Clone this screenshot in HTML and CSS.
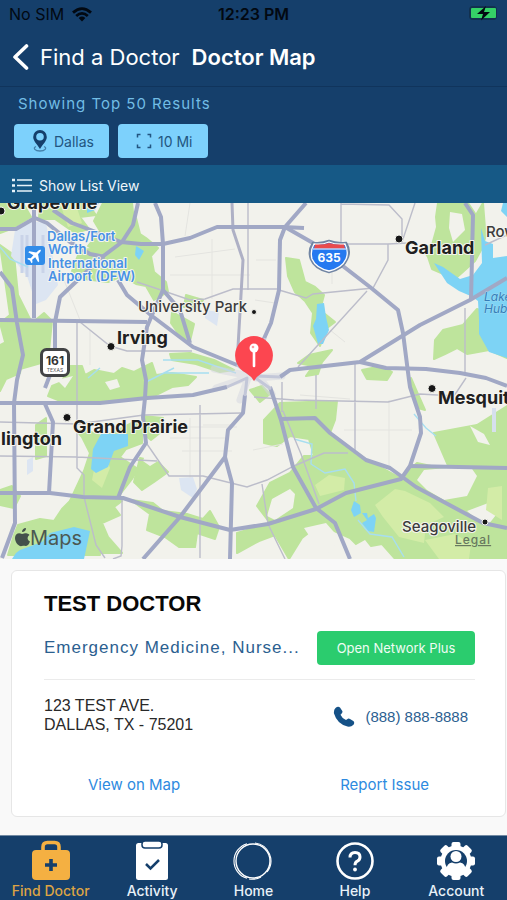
FILE: index.html
```html
<!DOCTYPE html>
<html lang="en">
<head>
<meta charset="utf-8">
<meta name="viewport" content="width=device-width, initial-scale=1">
<title>Doctor Map</title>
<link rel="stylesheet" href="styles.css">
</head>
<body>
<header class="top">
  <div class="status">
    <span class="carrier">No SIM
      <svg width="20" height="15" viewBox="0 0 20 15" aria-hidden="true"><g fill="none" stroke="#020912" stroke-width="2.8"><path d="M1 5.6Q10-2.4 19 5.6"/><path d="M4.2 9Q10 3.8 15.800 9"/></g><path d="M6.700 10.900Q10 8.200 13.300 10.900L10 14.500Z" fill="#020912"/></svg>
    </span>
    <span class="clock">12:23 PM</span>
    <svg class="battery" width="30" height="16" viewBox="0 0 30 16" aria-hidden="true"><rect x="1" y="0" width="28" height="14" rx="4" fill="#12304f"/><rect x="3" y="2" width="25" height="10" rx="1" fill="#35d167"/><path d="M18 0 9 8h6l-2 6.500L22 6h-6Z" fill="#020912"/></svg>
  </div>
  <nav class="crumbs">
    <a class="back" href="#find">
      <svg width="17" height="28" viewBox="0 0 17 28" aria-hidden="true"><path d="M14.500 3 3 14 14.500 25" fill="none" stroke="#fff" stroke-width="3.600" stroke-linecap="round" stroke-linejoin="round"/></svg>
      Find a Doctor</a>
    <h1>Doctor Map</h1>
  </nav>
  <section class="filters">
    <p>Showing Top 50 Results</p>
    <div class="chips">
      <button class="chip" type="button">
        <svg width="16" height="24" viewBox="0 0 16 24" aria-hidden="true"><path d="M4 17.500C.5 19 3 22 8 22s7.500-3 4-4.500" fill="none" stroke="#4481ab" stroke-width="1.300"/><path fill-rule="evenodd" d="M8 1a6.800 6.800 0 0 0-6.800 7C1.200 12 5 15 8 20c3-5 6.800-8 6.800-12A6.800 6.800 0 0 0 8 1Zm0 3a3.800 3.800 0 1 1 0 7.600A3.800 3.800 0 0 1 8 4Z" fill="#153f6b"/></svg>
        Dallas</button>
      <button class="chip" type="button">
        <svg width="16" height="16" viewBox="0 0 16 16" aria-hidden="true"><path d="M1.500 4.500v-3h3M11.500 1.500h3v3M14.500 11.500v3h-3M4.500 14.500h-3v-3" fill="none" stroke="#225580" stroke-width="1.500"/></svg>
        10 Mi</button>
    </div>
  </section>
  <button class="list-toggle" type="button">
    <svg width="20" height="15" viewBox="0 0 20 15" aria-hidden="true"><path d="M5 2h15M5 7.500h15M5 13h15" stroke="#e8f3fa" stroke-width="1.700"/><path d="M0 2h3M0 7.500h3M0 13h3" stroke="#e8f3fa" stroke-width="2.600"/></svg>
    Show List View</button>
</header>

<main>
  <div class="map">
  <svg viewBox="0 203 507 356" role="img" aria-label="Map of Dallas">
    <rect y="203" width="507" height="357" fill="#f2f2ec"/>
    <g class="green">
      <path d="M5 203h18l8 14-20 12-11 4v-30Z"/>
      <path d="M40 203h47l9 12-16 2 9 12-14 4-20-14-16 0Z"/>
      <path d="M103 203h29l2 18-10 20-24 12-12-7 12-15-6-10Z"/>
      <path d="M0 245 14 255l4 40 14 28 12-10 8 8-4 40-28 8-12-16-8-30 10-8Z"/>
      <path d="M0 345l12-6 12 6-4 28-14 6-6 12Z"/>
      <path d="M80 250l22-2 20-8 14-22 4 16 6 4 12 10-7 8 3 16 12 10 2 10-14 8-8-14-10-2-14-8-14 6-24-3-12-8Z"/>
      <path d="M172 312l22 12-4 17-10-5-9-13Z"/>
      <path d="M68 366h14l3 9 9-5 20 4 8-6 12 4 18-9 4 12 16-2 24 4-8 8-16 2-16 8-26 4-44 3-28-2-10-4 4-10 10-4Z"/>
      <path d="M170 354l20-1 24 7 20 10-14 2-24-8-24-4ZM143 416l20 2-2 14-10 8-10-8Z"/>
      <path d="M76 430l12 1 16 6 28-14 10-2v22l-16 6-6 8 18 12-6 10-14 18 4 4-8 6 6 8-18 8 6 14 14 16h-30l-16-20-4-24-2-8 14-30 6-18-8-16Z"/>
      <path d="M36 425l10-7v38l-10 3Z"/>
      <path d="M0 490l12-4 8 10-6 12-14-3ZM18 525l22-6 14 2 8-12 10-10 14-2 14 58H8l6-20Z"/>
      <path d="M140 458l18 4 10 10-14 10-12 8-8-8ZM131 500l22 3 10 8 24 3 16 5 7-8 9 16-4 12-18-6-2 14-16 0-14-10-18-7 3-16Z"/>
      <path d="M264 420l16-17 57-2-2 19-5 13 37 27 33 18 17-15 33 7-16-37 43-8 32-20v156H397l-15-17-22 4-10-10-18-8-12-6-18 14-13 21-14-24-16 6-22 12v-20l33-10-13-17 13-23 20-10 14-17 10 0-5-17-19-3-13 10-13-3Z"/>
      <path d="M286 258l13 2 6 22 10 5 9 8-4 15 15 12-8 6-7 18-9-13 2-20-8-12-10-9-7-16Z"/>
      <path d="M309 355l23-5-10 12-4 12-12 2 7-10-15-3Z"/>
      <path d="M438 203h30l8 12 7-12 3 38-11 20-20 18-23-10-4-12-5-8 9-4 5-18-1-10Z"/>
      <path d="M435 340l8-10 20-5 14-16 14 5 6 18 10 10v16l-18-8-22 4-10-6-12 6-11 5Z"/>
      <path d="M362 370l20-4 10 6-5 8-20-1ZM411 378l6 14 8 18-7-2-6-14Z"/>
      <path d="M186 295l17 5-5 8-14-1ZM250 390l12-4 8 8-10 8Z"/>
    </g>
    <g fill="#f2f2ec">
      <path d="M57 380l16-4-8 12ZM105 382l12-3 3 8-10 3Z"/>
      <path d="M145 455l9-4 4 10-8 5-7-5ZM272 499l18-10 5 5-2 14-18 12-8-4ZM304 528l22-5 14 16-12 14-18-16ZM470 426l14 8 6 11-12-3Z"/>
      <path d="M417 480l7-10 46-4 7 10-10 20-23 4-17-10ZM467 511l24-9 5 13-8 10-14-8ZM365 540l8 10-10 8-16-8Z"/>
      <path d="M450 212l12 2 3 16-12 12-4-14ZM487 234l8 3-5 12-6-3Z"/>
    </g>
    <g fill="#d3eca7">
      <path d="M315 485l14-10 16 3-1 12-24 6ZM375 505l20-16 10 2 25 12 14 14-18 8-2 18-25-6-16-20ZM425 540l30-6 16 10-2 15h-30ZM488 488l14-2v34l-16-10ZM488 318l19 20v18l-22-12 4-14ZM60 203l16 2 6 18-14 4ZM100 440l-8 40 10 8 8-20Z"/>
    </g>
    <g fill="#dce5f2">
      <path d="M15 230l15-9 16 2 4 20 8 42-12 15-10 4-9-28-16-20Z"/>
      <path d="M179 478l14-1 4 12-4 9-12-8ZM205 310l14 2-2 14-12-8ZM27 460l6-3v14l-6 4Z"/>
    </g>
    <g stroke="#c9d3e8" stroke-width="3"><path d="M22 235v38M27 235v42M43 235v38"/></g>
    <g fill="#7dd3f5">
      <path d="M101 434l27 0v12l-14 5-6 16-12 6-5-4 2-20Z"/>
      <path d="M20 550l22-8 8-9 24-6 16 4-6 28H12l4-6Z"/>
      <path d="M317 304l7-1 2 14 3 13-6 14-5 0-5-18 3-7Z"/>
      <path d="M354 501l6 4 1 8-7 4-3-7ZM362 513l5 0 1 5 6-4 2 4-2 14-6-1-6-8 5-3Z"/>
      <path d="M434 263l9 4 17 12 13-4v22l-14-6-12-8Z"/>
      <path d="M481 228l4 13 8 3v14l14-2v102l-18-6-10-18 0-15-1-18-8-6 3-20 9-12Z"/>
      <path d="M136 246l8 5-5 9-4-5ZM87 203h12l-4 7-8 3ZM503 203h4v14l-6-6Z"/>
    </g>
    <path d="M0 247l10 12 18 8M163 360h35l38 13M164 373h45M294 439l18 5-1 20 14 9 20-4 9 14 2 18M358 520l12 14 22 3 12 20M414 414l12 14 10 8M88 378l12-10M146 382l28-14" fill="none" stroke="#a7def0" stroke-width="1.400"/>
    <path d="M494 408v24" fill="none" stroke="#d6e0ed" stroke-width="4"/>
    <g fill="none" stroke="#e4e4e0" stroke-width="1"><path d="M170 275h80M175 257l60-8M190 203l-5 33M212 239v60M255 300l20 3M256 260h20M332 244v40M389 400v70M344 430h68M203 425h30M182 427h55M182 451h50M190 418v60M170 438h57M60 270l20 50M90 330v35M300 395l50 4M253 450l30-6M330 330l15 12"/></g>
    <g fill="none" stroke="#bcbdca" stroke-width="1.400">
      <path d="M248 203v87M137 282l18 6 35 12 15-1 28-10h46M77 320v148l7 7v22l12 48 9 13M80 322l30 24 17 5h65M0 422l77 2 67-9 98-2M0 456l77 1 80 4M147 444l22 32h34l44 11 20-7 27-14 30-13h24M341 203v41h47l20-1M341 204l48 1 13 14v23l13-39M388 244v16l-15 28-60 6-7 4-27-8M367 291l-69 76M355 364v90M465 308v68M485 245l22-10M316 375v34M282 382v30M254 397l40 3 94 2 32-8 34 2 12-18M200 405v153M122 500v46l-1 10-8 3M262 484l6 40 17 35M283 411l18 43 18 50"/>
    </g>
    <g class="haze" fill="none" stroke="#d3d5df"><path d="M214 369l42 8M216 388l36-12M248 378l-8 22M258 376l14 18M256 378l26-2" stroke-width="7"/></g>
    <path d="M232 203l1 27 10 30-5 87v20" fill="none" stroke="#aeb0c5" stroke-width="3"/>
    <g class="roads">
      <path d="M34 203v115M0 229h16l19-11 12 5 23 19 20 12 15 3"/>
      <path d="M53 210l19 13 24 9 25 10 20 2h22l27-6 27-11h66l21 1"/>
      <path d="M138 203l-5 22-11 17-20 15-42 40-5 25v40l-10 26"/>
      <path d="M155 203l6 14 2 27v46l-11 25-5 12-5 33 4 20-1 18-2 19 3 26-16 24-12 31"/>
      <path d="M163 290l17 20 10 33M0 320l147 2M118 280l9 15 25 21 41 31 44 18"/>
      <path d="M0 272l12 16 5 35 6 32-6 25-3 23 1 120-13 35"/>
      <path d="M0 403l100 0 47-5 46-3 34-8M45 404l8 18-4 71"/>
      <path d="M0 493h50l33 4 40 1 57 19 50 13 38-6 48-15 30-16 55-14 9-13 11-33-1-16-10-30-1-7-6-47-5-23-28-23-57-44-28-16-5 13-1 50-8 33-9 20"/>
      <path d="M245 395l-2 18-15 17-3 27 7 26-2 76M225 457l-45 60-37 42"/>
      <path d="M270 387l11 33 12 47 23 41 19 15 15 36"/>
      <path d="M281 419l34-1 15 15 36 27 24 8 26 19 67 36 24 5M410 466l97 2"/>
      <path d="M306 203l-21 24M280 377l10-7 70-8 60-37 50-25 37-22"/>
      <path d="M360 362l26 6 40 1 34 4 26 5 21 8M465 203l8 12-2 85"/>
    </g>
    <g class="roads faint"><path d="M237 365l20 14 14 10M227 387l20-9-2 18M265 338l-8 36M256 376l24 1"/></g>

    <g>
      <rect x="25" y="246" width="20" height="19" rx="3" fill="#318ce9"/>
      <path transform="translate(35 255.500) rotate(45)" d="M0-8C1-8 1.300-6 1.300-3L7 1v1.500L1.300 1 1 5l2 1.500V8L0 7l-3 1V6.500L-1 5l-.3-4L-7 2.500V1l5.700-4C-1.300-6-1-8 0-8Z" fill="#fff"/>
      <rect x="41.500" y="349.500" width="27" height="26" rx="5" fill="#fff" stroke="#424345" stroke-width="3"/>
      <text x="55" y="365" class="num" text-anchor="middle">161</text>
      <text x="55" y="372" class="tiny" text-anchor="middle">TEXAS</text>
      <path d="M313 243q9 1 16-2 7 3 17 2 5 8 1 16-4 10-18 13-14-3-18-13-3-8 2-16Z" fill="#2579f0" stroke="#7185a3" stroke-width="2.500"/>
      <path d="M314 244q8 1 15-2 7 3 16 2 4 8 1 15-4 9-17 12-13-3-17-12-2-8 2-15Z" fill="#2579f0" stroke="#fff" stroke-width="1.300"/>
      <path d="M315 244.500q8 .5 14-1.500 7 2 15 1.500l1 4h-31Z" fill="#e94b4d"/><path d="M313 249h33" stroke="#fff"/>
      <text x="329" y="262" class="shield" text-anchor="middle">635</text>
    </g>
    <g fill="#161616" stroke="#f5f5ef"><circle cx="1" cy="211" r="4"/><circle cx="111" cy="346.500" r="4"/><circle cx="399" cy="239" r="4"/><circle cx="67" cy="417.500" r="4"/><circle cx="432" cy="388.500" r="4"/><circle cx="485" cy="522" r="3"/><circle cx="254" cy="312" r="2.500"/></g>
    <g class="city">
      <text x="7" y="209">Grapevine</text>
      <text x="117" y="344">Irving</text>
      <text x="405" y="254">Garland</text>
      <text x="73" y="433">Grand Prairie</text>
      <text x="1" y="445">lington</text>
      <text x="438" y="404">Mesquite</text>
    </g>
    <g class="town"><text x="138" y="312">University Park</text><text x="402" y="532">Seagoville</text><text x="486" y="237">Rowlett</text></g>
    <g class="airport"><text x="47" y="241">Dallas/Fort</text><text x="48" y="254">Worth</text><text x="48" y="268">International</text><text x="48" y="281">Airport (DFW)</text></g>
    <g class="lake"><text x="484" y="301">Lake Ray</text><text x="484" y="313">Hubbard</text></g>
    <g fill="#43514b"><path d="M22 534c2 0 3-1 5-.5 1.200.2 2 .8 2.500 1.600-3 2-2 5.500.5 6.500-1 2.700-2.500 4.600-4.200 4.400-1.500-.5-2.400-.5-3.800 0C18.500 547 15 542 15 538c0-4 3.500-6 7-4Z"/><path d="M22 532c0-2 1.500-4 4-4 0 2.500-1.500 4-4 4Z"/></g>
    <text x="30" y="545" class="brand">Maps</text>
    <a href="#legal"><text x="455" y="544" class="legal">Legal</text></a>
    <g><path d="M254 336a19.500 19.500 0 0 0-8 37q5 3 8 8 3-5 8-8a19.500 19.500 0 0 0-8-37Z" fill="#fc4650"/><circle cx="254" cy="348" r="4.500" fill="#fff"/><path d="M254 350v16" stroke="#fff" stroke-width="2.600" stroke-linecap="round"/><circle cx="253" cy="347" r="1.300" fill="#fc9ba0"/></g>
  </svg>
  </div>

  <article class="card">
    <h2>TEST DOCTOR</h2>
    <div class="row specialty">
      <p>Emergency Medicine, Nurse...</p>
      <button class="plan" type="button">Open Network Plus</button>
    </div>
    <div class="row contact">
      <address>123 TEST AVE.<br>DALLAS, TX - 75201</address>
      <a class="phone" href="tel:8888888888">
        <svg width="22" height="22" viewBox="0 0 22 22" aria-hidden="true"><path d="M2.500 2Q5-.2 7 1.500L9.300 5Q10 6.500 8.300 7.900L7.500 8.700Q9 12.300 13 14l1.200-.8Q15.500 12 17 13l3.300 2Q22 16.500 20.500 18.700 18 21.300 14.500 20.600 4 17.800 1 7.500.5 4 2.500 2Z" fill="#155187"/></svg>
        (888) 888-8888</a>
    </div>
    <div class="actions"><a href="#map">View on Map</a><a href="#report">Report Issue</a></div>
  </article>
</main>

<nav class="tabs">
  <a class="active" href="#find"><svg width="40" height="40" viewBox="0 0 40 40" aria-hidden="true"><path d="M12 11V7q0-4.500 4.500-4.500h7Q28 2.500 28 7v4" fill="none" stroke="#f4b042" stroke-width="3.600"/><rect x="1" y="10" width="38" height="30" rx="4" fill="#f4b042"/><path d="M20 19v12M14 25h12" stroke="#153f6b" stroke-width="3.600"/></svg>Find Doctor</a>
  <a href="#activity"><svg width="40" height="40" viewBox="0 0 40 40" aria-hidden="true"><rect x="4" y="3" width="32" height="37" rx="2.500" fill="#fff"/><rect x="10" y="1" width="20" height="7" rx="3" fill="#fff" stroke="#153f6b" stroke-width="1.500"/><path d="m14 24 4.500 4.500L27 20" fill="none" stroke="#153f6b" stroke-width="2.500"/></svg>Activity</a>
  <a href="#home"><svg width="40" height="40" viewBox="0 0 40 40" aria-hidden="true"><g fill="none" stroke="#fff"><circle cx="20" cy="21" r="17" stroke-width="1.400"/><path d="M14 3.700a18 18 0 0 0 0 34.600M22 3a18 18 0 0 1 12 29M16 39q7 1 12-2" stroke-width="1.100"/></g></svg>Home</a>
  <a href="#help"><svg width="40" height="40" viewBox="0 0 40 40" aria-hidden="true"><circle cx="20" cy="21" r="17.500" fill="none" stroke="#fff" stroke-width="2.600"/><path d="M15 17.500q0-5 5-5t5 4.500q0 3-3 4.300-2 1-2 4" fill="none" stroke="#fff" stroke-width="3"/><circle cx="20" cy="29.500" r="1.900" fill="#fff"/></svg>Help</a>
  <a href="#account"><svg width="40" height="40" viewBox="0 0 40 40" aria-hidden="true"><g fill="#fff"><circle cx="20" cy="21" r="15.500"/><rect x="15.500" y="2" width="9" height="38" rx="2"/><rect x="1" y="16.500" width="38" height="9" rx="2"/><g transform="rotate(45 20 21)"><rect x="15.500" y="2" width="9" height="38" rx="2"/><rect x="1" y="16.500" width="38" height="9" rx="2"/></g></g><circle cx="20" cy="21" r="11" fill="#153f6b"/><circle cx="20" cy="16.500" r="5.500" fill="#fff"/><path d="M10.500 30q0-7 5.500-7.500 4 2 8 0 5.500.5 5.500 7.500-4 3.500-9.500 3.500T10.500 30Z" fill="#fff"/></svg>Account</a>
</nav>
</body>
</html>
```
FILE: styles.css
```css
* { box-sizing: border-box; }
body {
  margin: 0;
  min-height: 100vh;
  display: flex;
  flex-direction: column;
  background: #f9f9f9;
  font-family: Inter, "Liberation Sans", sans-serif;
}
h1, h2, p { margin: 0; }
a { color: inherit; text-decoration: none; }
button { border: 0; padding: 0; font-family: inherit; }
svg { flex: none; display: block; }

.top { background: #153f6b; color: #fff; }
.status {
  height: 28px;
  padding: 0 9px;
  display: grid;
  grid-template-columns: 1fr auto 1fr;
  align-items: center;
  color: #020912;
  font-size: 16px;
}
.carrier { display: flex; align-items: center; gap: 8px; }
.clock { font-weight: 600; }
.battery { justify-self: end; }
.crumbs {
  height: 59px;
  padding: 0 12px;
  display: flex;
  align-items: center;
  gap: 12px;
  border-bottom: 1px solid #10345c;
  font-size: 22px;
}
.back { display: flex; align-items: center; gap: 11px; }
h1 { font-size: 22px; font-weight: 600; }
.filters { height: 78px; padding: 8px 14px; }
.filters p {
  padding-left: 4px;
  font-size: 15px;
  line-height: 18px;
  letter-spacing: 1px;
  color: #72bde5;
}
.chips { display: flex; gap: 9px; margin-top: 11px; }
.chip {
  height: 34px;
  padding: 0 15px 0 18px;
  display: flex;
  align-items: center;
  gap: 6px;
  border-radius: 4px;
  background: #7dd1fc;
  color: #225580;
  font-size: 14px;
}
.list-toggle {
  width: 100%;
  height: 38px;
  padding: 2px 12px 0;
  display: flex;
  align-items: center;
  gap: 7px;
  background: #165986;
  color: #eef6fb;
  font-size: 14px;
}

main { flex: 1; }
.map svg { width: 100%; height: auto; }
.green { fill: #bee49c; stroke: #bee49c; stroke-width: 2; stroke-linejoin: round; }
.roads { fill: none; stroke: #a1a8c5; stroke-width: 4; stroke-linejoin: round; }
.faint { stroke: #c3c7d8; stroke-width: 3; }
.haze { opacity: .5; stroke-linecap: round; }
.map text { paint-order: stroke; stroke: #f5f5ef; stroke-width: 2px; stroke-linejoin: round; }
.city { font-size: 18px; font-weight: 700; fill: #202020; }
.town { font-size: 15px; font-weight: 500; fill: #3c3c3c; }
.airport { font-size: 13px; font-weight: 600; fill: #4791e5; }
.lake { font-size: 12px; font-style: italic; fill: #367eb8; }
.map .lake text { stroke: #9fdcf4; stroke-width: 1px; }
.num { font-size: 12px; font-weight: 700; fill: #333; }
.tiny { font-size: 5px; fill: #555; }
.shield { font-size: 12px; font-weight: 700; fill: #fff; }
.map .shield, .map .num, .map .tiny, .map .brand { stroke: none; }
.brand { font-size: 20px; fill: #4b5852; }
.map .legal { font-size: 12px; font-weight: 500; letter-spacing: 1px; fill: #68785f; stroke-width: 0; text-decoration: underline; }

.card {
  margin: 11px 1px 18px 11px;
  padding: 20px 30px 21px 32px;
  border: 1px solid #e6e6e6;
  border-radius: 6px;
  background: #fff;
}
.card h2 {
  font: bold 22px/26px "Liberation Sans", sans-serif;
  color: #080808;
}
.row { display: flex; justify-content: space-between; align-items: center; }
.specialty { padding: 14px 0; border-bottom: 1px solid #ebebeb; }
.specialty p {
  font-family: "Liberation Sans", sans-serif;
  font-size: 17px;
  letter-spacing: 1px;
  color: #2b6090;
  white-space: nowrap;
}
.plan {
  width: 158px;
  height: 34px;
  border-radius: 4px;
  background: #2bcc6e;
  color: #effcf4;
  font-size: 13px;
}
.contact { padding: 16px 7px 0 0; }
address { font: normal 16px/19px "Liberation Sans", sans-serif; color: #292929; }
.phone {
  display: flex;
  align-items: center;
  gap: 10px;
  padding-top: 3px;
  color: #2b6090;
  font-family: "Liberation Sans", sans-serif;
  font-size: 15px;
}
.actions {
  display: flex;
  justify-content: space-between;
  margin-top: 41px;
  padding: 0 46px 0 44px;
  font-size: 15px;
  line-height: 20px;
  color: #2d8ae0;
}

.tabs {
  height: 65px;
  padding-top: 4px;
  display: grid;
  grid-template-columns: repeat(5, 1fr);
  border-top: 1px solid #728aa3;
  background: #153f6b;
  color: #e8f1f8;
  font-size: 14px;
  font-weight: 500;
}
.tabs a { display: flex; flex-direction: column; align-items: center; gap: 3px; line-height: 16px; }
.tabs .active { color: #dda444; }
```
